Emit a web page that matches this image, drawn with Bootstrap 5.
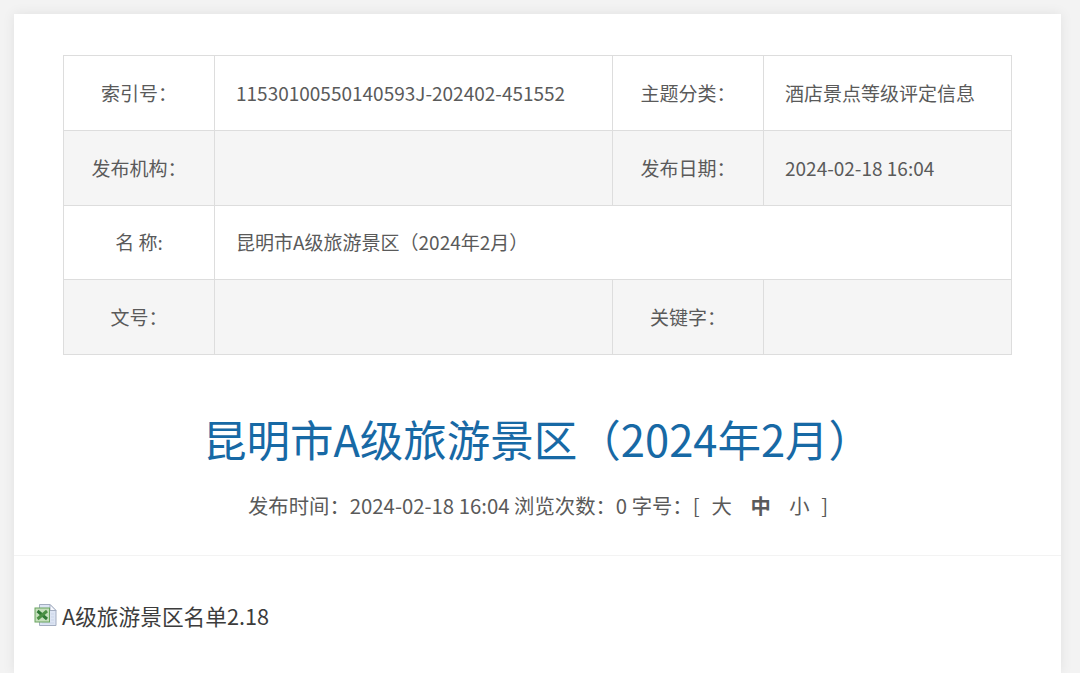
<!DOCTYPE html>
<html lang="zh-CN">

<head>
    <meta charset="UTF-8">
    <meta name="viewport" content="width=device-width, initial-scale=1.0">
    <title>昆明市A级旅游景区（2024年2月）</title>
    <!-- 引入 Bootstrap CSS -->
    <link href="https://cdn.jsdelivr.net/npm/bootstrap@5.3.3/dist/css/bootstrap.min.css" rel="stylesheet">
    <style>
        body {
            background-color: #f3f3f3;
            color: #5a5a5a;
            font-family: "Noto Sans CJK SC", sans-serif;
            height: 673px;
            padding: 14px 19px 0 14px;
        }

        .article {
            height: 659px;
            padding-top: 41px;
            box-shadow: 0 0 12px rgba(0, 0, 0, 0.08);
        }

        .info-table {
            --bs-table-color: #5a5a5a;
            width: 948px;
            margin-left: 49px;
            table-layout: fixed;
            border-color: #ddd;
            font-size: 19px;
            line-height: 28px;
        }

        .info-table td {
            height: 74.75px;
            padding: 0 20.5px 0 21px;
        }

        .info-table .label-cell {
            padding: 0;
            text-align: center;
        }

        .info-table .gray-row {
            --bs-table-bg: #f5f5f5;
        }

        .article-title {
            margin: 52px 0 0;
            color: #1769a5;
            font-size: 43.5px;
            line-height: 64px;
            font-weight: 400;
        }

        .article-meta {
            height: 85px;
            padding: 18px 0 0 234px;
            border-bottom: 1px solid #f3f3f3;
            font-size: 20.35px;
            line-height: 32px;
            white-space: pre;
        }

        .size-links {
            margin: 0 11.5px 0 12px;
        }

        .size-link {
            margin-right: 18.5px;
        }

        .attachment {
            padding: 43px 0 0 20px;
            color: #3c3c3c;
            font-size: 21.7px;
            line-height: 34px;
        }

        .xls-icon {
            margin: 5px 5px 0 0;
        }
    </style>
</head>

<body>
    <div class="article bg-white">
        <!-- 信息表 -->
        <table class="info-table table table-bordered align-middle mb-0">
            <colgroup>
                <col style="width: 151px">
                <col style="width: 398px">
                <col style="width: 151px">
                <col style="width: 248px">
            </colgroup>
            <tbody>
                <tr>
                    <td class="label-cell">索引号：</td>
                    <td>11530100550140593J-202402-451552</td>
                    <td class="label-cell">主题分类：</td>
                    <td>酒店景点等级评定信息</td>
                </tr>
                <tr class="gray-row">
                    <td class="label-cell">发布机构：</td>
                    <td></td>
                    <td class="label-cell">发布日期：</td>
                    <td>2024-02-18 16:04</td>
                </tr>
                <tr>
                    <td class="label-cell">名 称:</td>
                    <td colspan="3">昆明市A级旅游景区（2024年2月）</td>
                </tr>
                <tr class="gray-row">
                    <td class="label-cell">文号：</td>
                    <td></td>
                    <td class="label-cell">关键字：</td>
                    <td></td>
                </tr>
            </tbody>
        </table>

        <h1 class="article-title text-center">昆明市A级旅游景区（2024年2月）</h1>
        <div class="article-meta">发布时间：2024-02-18 16:04 浏览次数：0 字号：[<span class="size-links"><span class="size-link">大</span><b class="size-link">中</b><span>小</span></span>]</div>

        <!-- 附件 -->
        <div class="attachment d-flex align-items-start">
            <svg class="xls-icon" width="23" height="23" viewBox="0 0 23 23">
                <path d="M5.5 .5h10.500l6 6v15h-16.500z" fill="#dce4f3" stroke="#a3adc0" />
                <path d="M16 .5v6h6z" fill="#f8faff" stroke="#a3adc0" />
                <path d="M17 10h3M17 13h3M17 16h3M8 19h12" stroke="#cbd5e8" />
                <rect x="1" y="4" width="14.500" height="14" fill="#c5dfbc" stroke="#68a35f" />
                <path d="M3.500 7l9.500 8" stroke="#2f7935" stroke-width="3" />
                <path d="M13 7l-9.500 8" stroke="#4b9044" stroke-width="3" />
            </svg>
            <span>A级旅游景区名单2.18</span>
        </div>
    </div>

    <!-- 引入 Bootstrap JS -->
    <script src="https://cdn.jsdelivr.net/npm/bootstrap@5.3.3/dist/js/bootstrap.bundle.min.js"></script>
</body>

</html>
